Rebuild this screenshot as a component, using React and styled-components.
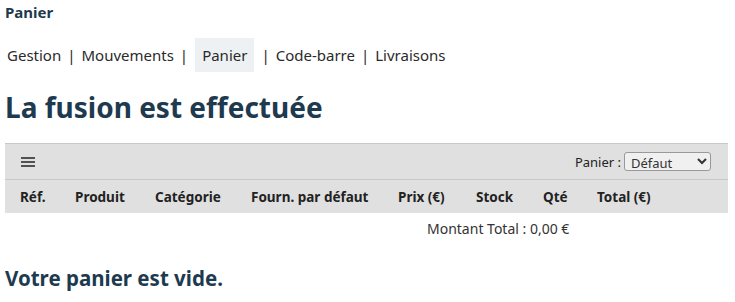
import styled, { createGlobalStyle } from 'styled-components'

const Global = createGlobalStyle`
body {
  margin: 0;
  background: #fff;
  font-family: "Noto Sans", "Open Sans", sans-serif;
  color: #333;
}
`

const Page = styled.div`
padding: 3px 4px 0 5px;
`
const Title = styled.div`
font-size: 15px;
font-weight: bold;
color: #1e3a4f;
height: 18px;
line-height: 18px;
`
const Nav = styled.nav`
display: flex;
align-items: center;
margin-top: 17px;
font-size: 15px;
height: 34px;
color: #2a2a2a;
`
const NavItem = styled.span`
display: flex;
align-items: center;
height: 34px;
padding: 0 ${props => props.active ? '7px' : '2px'};
background: ${props => props.active ? '#eef1f4' : 'transparent'};
margin: 0 ${props => props.active ? '3px' : '0'};
`
const Sep = styled.span`
padding: 0 4px;
`
const Heading = styled.h1`
margin: 17px 0 0;
font-size: 28px;
line-height: 36px;
color: #1e3a4f;
`
const Table = styled.div`
margin-top: 18px;
width: 723px;
background: #e0e0e0;
border-top: 1px solid #c8c8c8;
`
const Toolbar = styled.div`
display: flex;
align-items: center;
justify-content: space-between;
height: 35px;
padding: 0 16px;
border-bottom: 1px solid #c8c8c8;
font-size: 13px;
color: #222;
`
const Picker = styled.label`
display: flex;
align-items: center;
gap: 3px;
margin-right: 1px;
`
const Select = styled.select`
width: 87px;
height: 19px;
font-family: inherit;
font-size: 13px;
color: #333;
background: #f0f0f0;
border: 1px solid #999;
border-radius: 3px;
padding: 0 2px;
`
const HeadRow = styled.div`
display: flex;
align-items: center;
height: 33px;
font-size: 13.5px;
font-weight: bold;
color: #222;
`
const Cell = styled.span`
width: ${props => props.w}px;
padding-left: ${props => props.first ? 15 : 0}px;
`
const Total = styled.div`
margin: 6px 0 0 422px;
font-size: 14px;
color: #333;
`
const Empty = styled.h2`
margin: 26px 0 0;
font-size: 20.5px;
color: #1e3a4f;
`

const cols = [
  ['Réf.', 55],
  ['Produit', 80],
  ['Catégorie', 96],
  ['Fourn. par défaut', 147],
  ['Prix (€)', 78],
  ['Stock', 67],
  ['Qté', 54],
  ['Total (€)', 80],
]

function Burger() {
  return (
    <svg width="14" height="10" viewBox="0 0 14 10">
      <path d="M0 1h14M0 5h14M0 9h14" stroke="#222" strokeWidth="1.3" />
    </svg>
  )
}

export default function App() {
  const links = ['Gestion', 'Mouvements', 'Panier', 'Code-barre', 'Livraisons']
  return (
    <Page>
      <Global />
      <Title>Panier</Title>
      <Nav>
        {links.map((l, i) => (
          <span key={l} style={{ display: 'contents' }}>
            {i > 0 && <Sep>|</Sep>}
            <NavItem active={l === 'Panier'}>{l}</NavItem>
          </span>
        ))}
      </Nav>
      <Heading>La fusion est effectuée</Heading>
      <Table>
        <Toolbar>
          <Burger />
          <Picker>
            Panier :
            <Select defaultValue="d">
              <option value="d">Défaut</option>
            </Select>
          </Picker>
        </Toolbar>
        <HeadRow>
          {cols.map(([t, w], i) => (
            <Cell key={t} w={w} first={i === 0}>{t}</Cell>
          ))}
        </HeadRow>
      </Table>
      <Total>Montant Total : 0,00 €</Total>
      <Empty>Votre panier est vide.</Empty>
    </Page>
  )
}
